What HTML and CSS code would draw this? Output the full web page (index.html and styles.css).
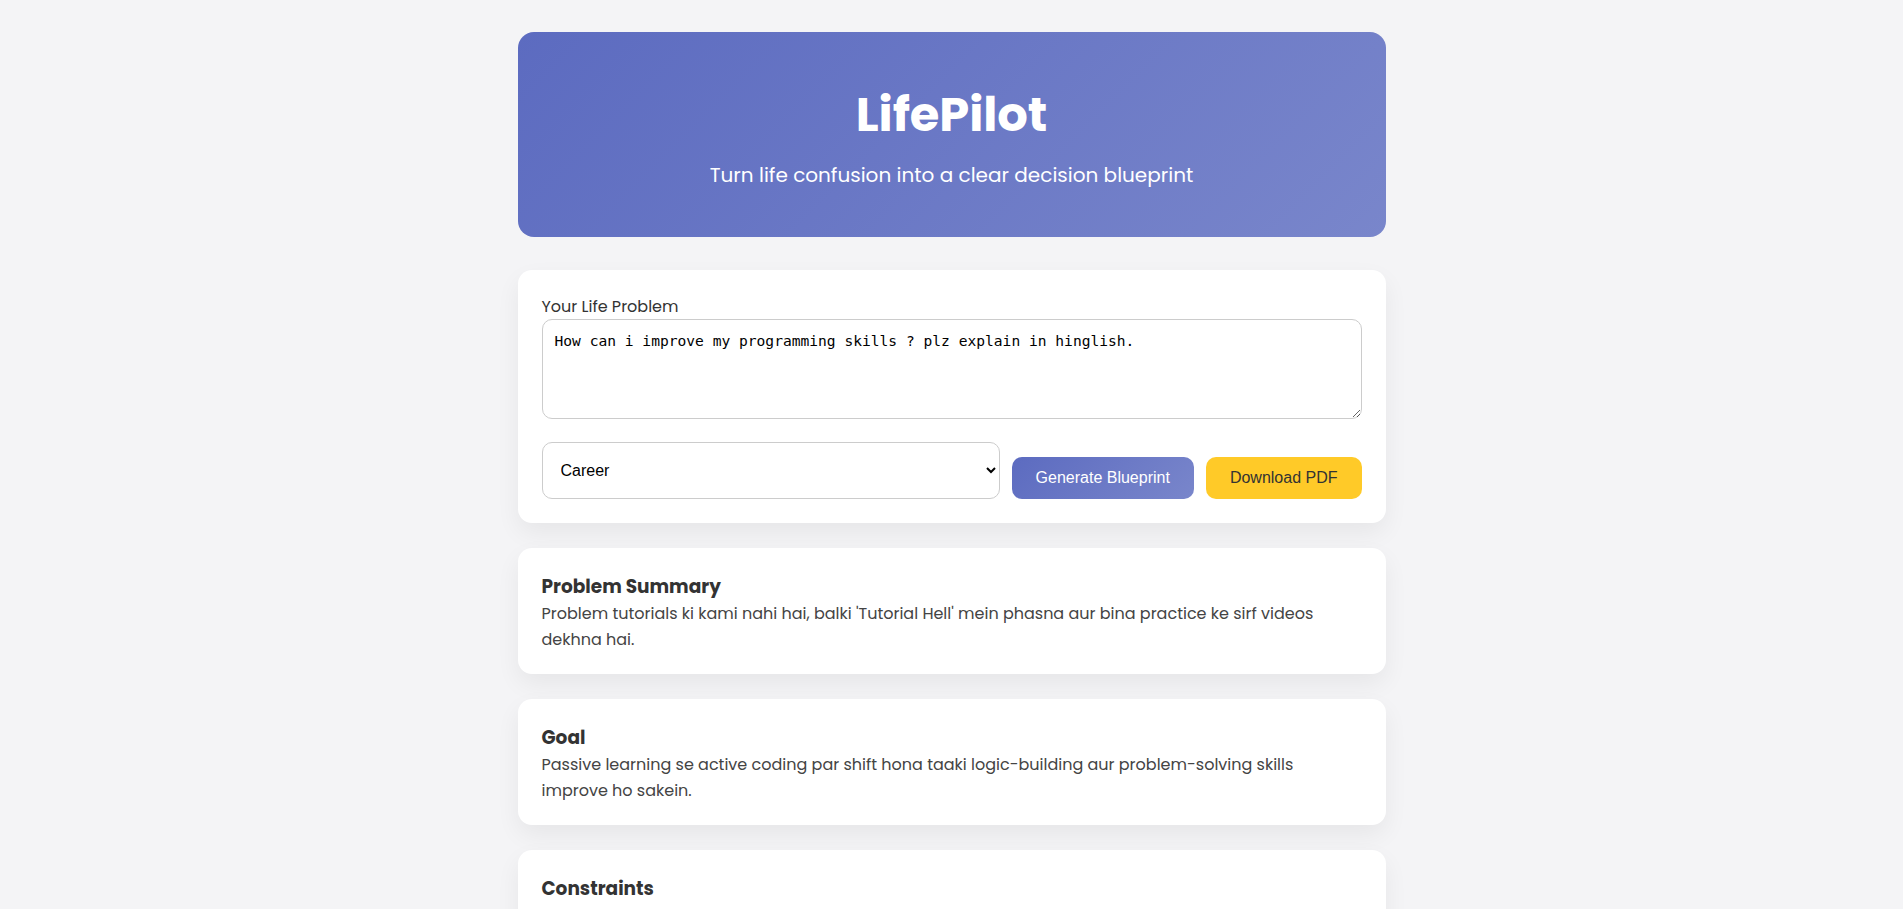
FILE: index.html
```html
<!DOCTYPE html>
<html lang="en">
<head>
<meta charset="utf-8">
<title>LifePilot</title>
<link rel="stylesheet" href="styles.css">
</head>
<body>
<div class="container">
  <header class="hero">
    <h1 class="hero-title">LifePilot</h1>
    <p class="hero-sub">Turn life confusion into a clear decision blueprint</p>
  </header>

  <section class="card form-card">
    <label class="field-label" for="problem">Your Life Problem</label>
    <textarea id="problem" class="problem-input">How can i improve my programming skills ? plz explain in hinglish.</textarea>
    <div class="controls">
      <select class="category">
        <option>Career</option>
        <option>Health</option>
        <option>Relationships</option>
        <option>Finance</option>
      </select>
      <button class="btn btn-primary" type="button">Generate Blueprint</button>
      <button class="btn btn-secondary" type="button">Download PDF</button>
    </div>
  </section>

  <section class="card result-card">
    <h3 class="result-title">Problem Summary</h3>
    <p class="result-text">Problem tutorials ki kami nahi hai, balki 'Tutorial Hell' mein phasna aur bina practice ke sirf videos dekhna hai.</p>
  </section>

  <section class="card result-card">
    <h3 class="result-title">Goal</h3>
    <p class="result-text">Passive learning se active coding par shift hona taaki logic-building aur problem-solving skills improve ho sakein.</p>
  </section>

  <section class="card result-card">
    <h3 class="result-title">Constraints</h3>
    <p class="result-text">Limited time, consistency ki kami aur beginner level par confusion ki wajah se progress slow hai.</p>
  </section>
</div>
</body>
</html>
```

FILE: styles.css
```css
* {
  box-sizing: border-box;
}

html, body {
  margin: 0;
  padding: 0;
}

body {
  background: #f4f4f6;
  font-family: Poppins, Inter, "Noto Sans", sans-serif;
  color: #333;
}

.container {
  max-width: 900px;
  margin: 0 auto;
  padding: 32px 16px 40px;
}

.hero {
  background: linear-gradient(135deg, #5c6bc0 0%, #7986cb 100%);
  border-radius: 16px;
  color: #fff;
  text-align: center;
  padding: 55px 24px 47px;
  margin-bottom: 33px;
}

.hero-title {
  margin: 0;
  font-size: 48px;
  line-height: 56px;
  font-weight: 700;
  letter-spacing: -0.1px;
}

.hero-sub {
  margin: 17px 0 0;
  font-size: 20px;
  line-height: 30px;
  font-weight: 400;
}

.card {
  background: #fff;
  border-radius: 14px;
  padding: 24px;
  margin-bottom: 25px;
  box-shadow: 0 10px 25px rgba(0, 0, 0, 0.06);
}

.result-card {
  padding: 25px 24px 22px;
}

.field-label {
  display: block;
  font-size: 16px;
  line-height: 25px;
  color: #333;
}

.problem-input {
  display: block;
  width: 100%;
  height: 100px;
  padding: 12px;
  border: 1px solid #ccc;
  border-radius: 10px;
  font-family: "DejaVu Sans Mono", "Liberation Mono", monospace;
  font-size: 14.6px;
  color: #000;
  resize: vertical;
}

.controls {
  display: flex;
  align-items: flex-end;
  gap: 12px;
  margin-top: 23px;
}

.category {
  flex: 1;
  height: 57px;
  padding: 0 10px 0 14px;
  border: 1px solid #ccc;
  border-radius: 10px;
  background: #fff;
  font-family: "Liberation Sans", Arial, sans-serif;
  font-size: 16px;
  color: #000;
}

.btn {
  height: 42px;
  padding: 0 24px;
  border: none;
  border-radius: 10px;
  font-family: "Liberation Sans", Arial, sans-serif;
  font-size: 16px;
  cursor: pointer;
}

.btn-primary {
  background: linear-gradient(135deg, #5c6bc0 0%, #7986cb 100%);
  color: #fff;
}

.btn-secondary {
  background: #ffca28;
  color: #333;
}

.result-title {
  margin: 0 0 1px;
  font-size: 18.5px;
  line-height: 27px;
  font-weight: 700;
  color: #333;
}

.result-text {
  margin: 0;
  padding-right: 24px;
  font-size: 16px;
  line-height: 25.5px;
  color: #444;
}
```
